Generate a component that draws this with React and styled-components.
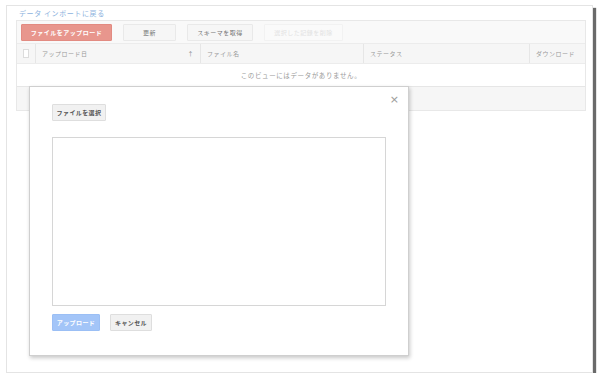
import React from "react";
import styled, { createGlobalStyle } from "styled-components";

const GlobalStyle = createGlobalStyle`
  body {
    margin: 0;
    background: #ffffff;
    font-family: "Noto Sans CJK JP", "Noto Sans", sans-serif;
  }
`;

const Frame = styled.div`
  position: relative;
  box-sizing: border-box;
  margin: 5px 0 0 6px;
  width: 587px;
  height: 368px;
  background: #fff;
  border: 1px solid #e4e4e4;
  box-shadow: 3px 3px 1px #6a6a6a;
  padding: 1px 6px 0 9px;
`;

const BackLink = styled.a`
  display: block;
  padding-left: 3px;
  height: 13px;
  line-height: 13px;
  font-size: 7px;
  letter-spacing: 0.6px;
  color: #8db3de;
  text-decoration: none;
`;

const Grid = styled.div`
  border: 1px solid #e8e8e8;
  background: #fff;
`;

const Toolbar = styled.div`
  display: flex;
  align-items: center;
  gap: 11px;
  height: 22px;
  padding: 0 4px;
  background: #f9f9f9;
  border-bottom: 1px solid #ececec;
`;

const ToolButton = styled.button`
  box-sizing: border-box;
  height: 17px;
  width: ${(p) => p.$w}px;
  padding: 0;
  font-family: inherit;
  font-size: 6px;
  letter-spacing: 0.5px;
  font-weight: ${(p) => (p.$primary ? 700 : 400)};
  color: ${(p) => (p.$primary ? "#fff" : p.$disabled ? "#e2e2e2" : "#777")};
  background: ${(p) => (p.$primary ? "#e8968d" : p.$disabled ? "#fafafa" : "#f6f6f6")};
  border: 1px solid ${(p) => (p.$primary ? "#e28b82" : p.$disabled ? "#f2f2f2" : "#e9e9e9")};
  border-radius: 1px;
`;

const Row = styled.div`
  display: grid;
  grid-template-columns: 18px 165px 163px 166px 1fr;
  height: ${(p) => p.$h}px;
  background: ${(p) => p.$bg || "#fff"};
  border-bottom: 1px solid #ececec;
`;

const HeadCell = styled.div`
  display: flex;
  align-items: center;
  justify-content: space-between;
  padding: 0 6px;
  font-size: 6px;
  letter-spacing: 0.5px;
  color: #999;
  border-left: ${(p) => (p.$first ? "none" : "1px solid #e6e6e6")};
`;

const SortArrow = styled.span`
  color: #888;
  font-size: 6px;
`;

const CheckBox = styled.span`
  display: block;
  width: 7px;
  height: 7px;
  margin: 0 auto;
  border: 1px solid #dcdcdc;
  background: #fff;
`;

const EmptyRow = styled.div`
  height: 22px;
  display: flex;
  align-items: center;
  justify-content: center;
  font-size: 6.5px;
  letter-spacing: 0.6px;
  color: #999;
  border-bottom: 1px solid #e6e6e6;
`;

const Footer = styled.div`
  height: 23px;
  background: #f6f6f6;
`;

const Modal = styled.div`
  position: absolute;
  left: 22px;
  top: 80px;
  box-sizing: border-box;
  width: 380px;
  height: 270px;
  background: #fff;
  border: 1px solid #cfcfcf;
  box-shadow: 1px 2px 4px rgba(0, 0, 0, 0.22);
  padding: 17px 22px 0 22px;
`;

const Close = styled.span`
  position: absolute;
  right: 9px;
  top: 6px;
  font-size: 11px;
  color: #9a9a9a;
  font-family: "DejaVu Sans", sans-serif;
`;

const Button = styled.button`
  display: block;
  box-sizing: border-box;
  height: 17px;
  width: ${(p) => p.$w}px;
  padding: 0;
  font-family: inherit;
  font-size: 6px;
  font-weight: 700;
  letter-spacing: 0.4px;
  color: ${(p) => (p.$blue ? "#fff" : "#555")};
  background: ${(p) => (p.$blue ? "#a3c5f8" : "#f1f1f1")};
  border: 1px solid ${(p) => (p.$blue ? "#9bbff5" : "#dedede")};
  border-radius: 1px;
`;

const TextArea = styled.div`
  box-sizing: border-box;
  width: 334px;
  height: 169px;
  margin-top: 16px;
  border: 1px solid #d6d6d6;
`;

const Actions = styled.div`
  display: flex;
  gap: 10px;
  margin-top: 8px;
`;

export default function App() {
  const columns = ["アップロード日", "ファイル名", "ステータス", "ダウンロード"];
  return (
    <>
      <GlobalStyle />
      <Frame>
        <BackLink href="#">データ インポートに戻る</BackLink>
        <Grid>
          <Toolbar>
            <ToolButton $primary $w={91}>ファイルをアップロード</ToolButton>
            <ToolButton $w={53}>更新</ToolButton>
            <ToolButton $w={66}>スキーマを取得</ToolButton>
            <ToolButton $disabled $w={79}>選択した記録を削除</ToolButton>
          </Toolbar>
          <Row $h={19} $bg="#f6f6f6">
            <HeadCell $first>
              <CheckBox />
            </HeadCell>
            {columns.map((c, idx) => (
              <HeadCell key={`col-${idx}`}>
                <span>{c}</span>
                {idx === 0 && <SortArrow>↑</SortArrow>}
              </HeadCell>
            ))}
          </Row>
          <EmptyRow>このビューにはデータがありません。</EmptyRow>
          <Footer />
        </Grid>
        <Modal>
          <Close>×</Close>
          <Button $w={54}>ファイルを選択</Button>
          <TextArea />
          <Actions>
            <Button $blue $w={48}>アップロード</Button>
            <Button $w={42}>キャンセル</Button>
          </Actions>
        </Modal>
      </Frame>
    </>
  );
}
